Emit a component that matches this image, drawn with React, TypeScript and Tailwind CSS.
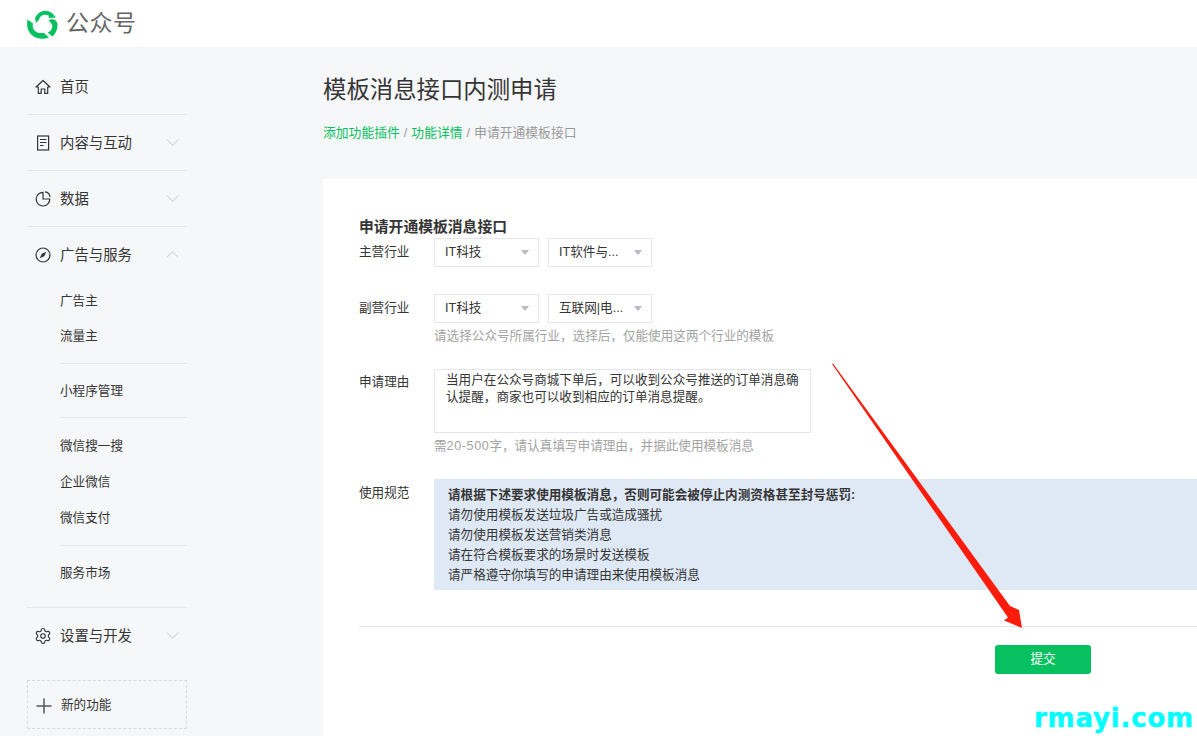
import { Plus, Settings } from "lucide-react";
import type { ReactNode } from "react";

const FONT = "font-['Liberation_Sans','Noto_Sans_CJK_SC',sans-serif]";

function Logo() {
  return (
    <svg width="31" height="30" viewBox="0 0 31 30" fill="#07c160">
      <path d="M8 9.5C10 3.5 18 -1.5 25.5 4.5L29 8.5L21.5 9L22 6.8C18 4.6 13 6.2 12 10.8L9 14Z" />
      <path d="M0.5 10.5L6 14.5L5.6 17C6 21 9.5 24.5 14.5 24L17 24L22 28.5C13.5 31.5 3 29 0.4 18.5C0 15.5 0 13 0.5 10.5Z" />
      <path d="M21.5 11C27 9 31 12 30.5 17C30.5 21 28 25.5 25.5 27.5L20.5 23.5C24 22.5 26 19 25 15.5Z" />
    </svg>
  );
}

function HomeIcon() {
  return (
    <svg width="16" height="16" viewBox="0 0 16 16" fill="none" stroke="#333" strokeWidth="1.2">
      <path d="M1 8L8 1.5L15 8H12.7V14.4H9.8V10H6.2V14.4H3.3V8Z" strokeLinejoin="round" />
    </svg>
  );
}

function DocIcon() {
  return (
    <svg width="16" height="16" viewBox="0 0 16 16" fill="none" stroke="#333" strokeWidth="1.2">
      <rect x="2.6" y="1" width="11" height="14" />
      <path d="M5 4.5H11.5M5 7.5H11.5M5 10.5H8.5" />
    </svg>
  );
}

function PieIcon() {
  return (
    <svg width="16" height="16" viewBox="0 0 16 16" fill="none" stroke="#333" strokeWidth="1.2">
      <path d="M8 1.4A6.8 6.8 0 1 0 14.8 8H8Z" />
      <path d="M10 0.8A5.6 5.6 0 0 1 15 6" />
    </svg>
  );
}

function CompassIcon() {
  return (
    <svg width="16" height="16" viewBox="0 0 16 16" fill="none" stroke="#333" strokeWidth="1.2">
      <circle cx="8" cy="8" r="7" />
      <path d="M11.3 4.7L9.2 9.2L4.7 11.3L6.8 6.8Z" fill="#333" stroke="none" />
    </svg>
  );
}

function Chevron({ up }: { up?: boolean }) {
  return (
    <svg className="ml-auto mr-[8px]" width="13" height="7" viewBox="0 0 13 7" fill="none" stroke="#c4c6cb" strokeWidth="1">
      <path d={up ? "M0.8 6.5L6.5 0.8L12.2 6.5" : "M0.8 0.5L6.5 6.2L12.2 0.5"} />
    </svg>
  );
}

function NavItem({ icon, label, open }: { icon: ReactNode; label: string; open?: boolean }) {
  return (
    <div className="flex h-[55px] items-center pl-[8px] text-[14.4px] text-[#353535]">
      <span className="flex w-[25px] items-center">{icon}</span>
      <span className="pt-[2px]">{label}</span>
      {open === undefined ? null : <Chevron up={open} />}
    </div>
  );
}

function Select({ value, width }: { value: string; width: string }) {
  return (
    <div className={`flex h-[29px] items-center border border-[#e4e6eb] bg-white pl-[10px] pr-[9px] text-[12.6px] text-[#353535] ${width}`}>
      <span>{value}</span>
      <span className="ml-auto h-0 w-0 border-x-[4.5px] border-t-[5px] border-x-transparent border-t-[#b9bbc0]" />
    </div>
  );
}

function Label({ children }: { children: string }) {
  return <div className="w-[75px] shrink-0 text-[12.6px] leading-[28px] text-[#353535]">{children}</div>;
}

export default function App() {
  return (
    <div className={`relative h-[736px] w-[1197px] overflow-hidden bg-[#f6f7f9] ${FONT}`}>
      <header className="flex h-[47px] items-center gap-[8px] bg-white pl-[27px]">
        <Logo />
        <span className="text-[23px] tracking-[0.5px] text-[#666]">公众号</span>
      </header>

      <div className="flex">
        <aside className="ml-[27px] mt-[12px] w-[160px] shrink-0">
          <div className="border-b border-[#e4e6eb]">
            <NavItem icon={<HomeIcon />} label="首页" />
          </div>
          <div className="border-b border-[#e4e6eb]">
            <NavItem icon={<DocIcon />} label="内容与互动" open={false} />
          </div>
          <div className="border-b border-[#e4e6eb]">
            <NavItem icon={<PieIcon />} label="数据" open={false} />
          </div>
          <NavItem icon={<CompassIcon />} label="广告与服务" open />

          <div className="ml-[33px] text-[12.6px] text-[#353535]">
            <div className="flex h-[36px] items-center pt-[2px]">广告主</div>
            <div className="flex h-[36px] items-center">流量主</div>
            <div className="mt-[9px] flex h-[55px] items-center border-y border-[#e4e6eb] pt-[2px]">小程序管理</div>
            <div className="mt-[10px] flex h-[36px] items-center">微信搜一搜</div>
            <div className="flex h-[36px] items-center">企业微信</div>
            <div className="flex h-[36px] items-center">微信支付</div>
            <div className="mt-[9px] flex h-[55px] items-center border-t border-[#e4e6eb]">服务市场</div>
          </div>

          <div className="mt-[7px] border-t border-[#e4e6eb]">
            <NavItem icon={<Settings size={18} strokeWidth={1.5} color="#333" className="-ml-px" />} label="设置与开发" open={false} />
          </div>

          <div className="mt-[17px] flex h-[49px] items-center border border-dashed border-[#d9dadc] pl-[4px] pt-[2px] text-[12.6px] text-[#353535]">
            <Plus size={24} strokeWidth={1.5} color="#555" />
            <span className="ml-[5px]">新的功能</span>
          </div>
        </aside>

        <main className="ml-[136px] min-w-0 flex-1">
          <h1 className="mt-[25px] text-[23.4px] leading-[36px] font-normal text-[#353535]">模板消息接口内测申请</h1>
          <p className="mt-[15px] text-[12.8px] leading-[20px] text-[#9a9a9a]">
            <span className="text-[#07c160]">添加功能插件</span>
            <span className="px-[4px]">/</span>
            <span className="text-[#07c160]">功能详情</span>
            <span className="px-[4px]">/</span>
            申请开通模板接口
          </p>

          <section className="mt-[36px] h-[600px] rounded-tl-[2px] bg-white pl-[36px] pt-[38px]">
            <h2 className="text-[14.8px] leading-[20px] font-bold text-[#353535]">申请开通模板消息接口</h2>

            <div className="mt-[1px] flex">
              <Label>主营行业</Label>
              <div className="flex gap-[9px]">
                <Select value="IT科技" width="w-[105px]" />
                <Select value="IT软件与..." width="w-[104px]" />
              </div>
            </div>

            <div className="mt-[27px] flex">
              <Label>副营行业</Label>
              <div>
                <div className="flex gap-[9px]">
                  <Select value="IT科技" width="w-[105px]" />
                  <Select value="互联网|电..." width="w-[104px]" />
                </div>
                <p className="mt-[3px] text-[12.6px] leading-[20px] text-[#a3a3a3]">
                  请选择公众号所属行业，选择后，仅能使用这两个行业的模板
                </p>
              </div>
            </div>

            <div className="mt-[23px] flex">
              <div className="-mt-px">
                <Label>申请理由</Label>
              </div>
              <div>
                <textarea
                  readOnly
                  className="block h-[64px] w-[377px] resize-none border border-[#e4e6eb] pl-[11px] pr-[10px] pt-[2px] text-[12.6px] leading-[17px] text-[#353535] outline-none"
                  value="当用户在公众号商城下单后，可以收到公众号推送的订单消息确认提醒，商家也可以收到相应的订单消息提醒。"
                />
                <p className="mt-[3px] text-[12.6px] leading-[20px] text-[#a3a3a3]">
                  需<span className="tracking-[0.6px]">20-500</span>字，请认真填写申请理由，并据此使用模板消息
                </p>
              </div>
            </div>

            <div className="mt-[23px] flex">
              <Label>使用规范</Label>
              <div className="h-[111px] flex-1 bg-[#dfe9f5] pl-[14px] pt-[6px] text-[12.6px] leading-[20px] text-[#353535]">
                <p className="font-bold">请根据下述要求使用模板消息，否则可能会被停止内测资格甚至封号惩罚:</p>
                <p>请勿使用模板发送垃圾广告或造成骚扰</p>
                <p>请勿使用模板发送营销类消息</p>
                <p>请在符合模板要求的场景时发送模板</p>
                <p>请严格遵守你填写的申请理由来使用模板消息</p>
              </div>
            </div>

            <div className="mt-[36px] border-t border-[#e4e6eb] pl-[636px] pt-[18px]">
              <button className="h-[29px] w-[96px] rounded-[3px] bg-[#07c160] text-[12.6px] text-white">提交</button>
            </div>
          </section>
        </main>
      </div>

      {/* red annotation arrow drawn on top of the screenshot */}
      <svg className="absolute left-[820px] top-[350px]" width="220" height="290" viewBox="0 0 220 290">
        <path d="M12 14L13 13.5L190 256L199 260L202 278L184 270.5L188 267.5Z" fill="#fb1c0c" />
      </svg>

      <span className="absolute left-[1034px] top-[702px] font-['DejaVu_Sans',sans-serif] text-[26px] leading-[32px] font-bold tracking-[0.8px] text-[#00ffff] [-webkit-text-stroke:0.4px_#00ffff]">
        rmayi.com
      </span>
    </div>
  );
}
